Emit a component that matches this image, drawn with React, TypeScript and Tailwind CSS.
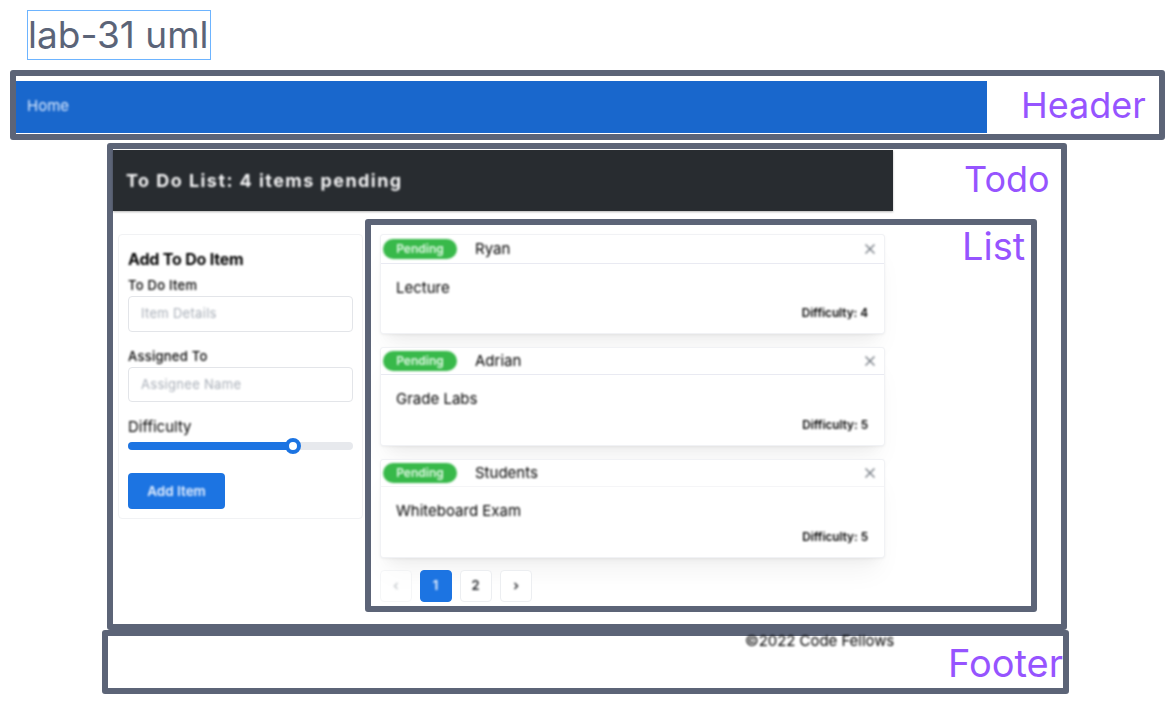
import React from "react";

const labelClass = "text-[36px] leading-[44px] text-[#9654ff] font-['Inter',sans-serif] whitespace-nowrap";

function Card({ name, task, level, h, head, line }: { name: string; task: string; level: number; h: string; head: string; line: string }) {
  return (
    <div className={`w-[505px] ${h} bg-white rounded-[3px] border border-[#f1f2f5] shadow-[0_1px_3px_rgba(0,0,0,0.05),0_20px_25px_-7px_rgba(0,0,0,0.05),0_10px_10px_-7px_rgba(0,0,0,0.04)] flex flex-col`}>
      <div className={`${head} border-b ${line} flex items-center pl-[2px] pr-[9px]`}>
        <span className="w-[74px] h-[20px] rounded-full bg-[#38b94a] text-[#e6fae9] text-[12px] font-semibold flex items-center justify-center blur-[0.8px]">Pending</span>
        <span className="ml-[18px] text-[15px] text-[#000000] blur-[0.8px]">{name}</span>
        <svg className="ml-auto blur-[0.8px]" width="10" height="10" viewBox="0 0 10 10" fill="none" stroke="#6f767e" strokeWidth="1.3"><path d="M0.5 0.5l9 9M9.5 0.5l-9 9" /></svg>
      </div>
      <div className="flex-1 flex flex-col pl-[15px] pr-[16px] pt-[14px]">
        <p className="text-[15px] leading-[20px] text-[#000000] blur-[0.8px]">{task}</p>
        <p className="mt-auto pb-[12px] text-right text-[11.7px] leading-[16px] font-semibold text-[#000000] blur-[0.8px]">Difficulty: {level}</p>
      </div>
    </div>
  );
}

function PageButton({ children, active, muted }: { children: React.ReactNode; active?: boolean; muted?: boolean }) {
  return (
    <div className={`w-[32px] h-[32px] rounded-[4px] border flex items-center justify-center text-[13px] font-semibold ${active ? "bg-[#1c74e2] border-[#1c74e2] text-[#eef5ff]" : "bg-white border-[#eceef1] text-[#1d2024]"} ${muted ? "opacity-50" : ""}`}>
      <span className="blur-[0.8px] flex mr-[1px]">{children}</span>
    </div>
  );
}

function Field({ label, placeholder, top, h }: { label: string; placeholder: string; top: string; h: string }) {
  return (
    <div className={top}>
      <p className="text-[13px] leading-[18px] font-medium tracking-[0.25px] text-[#000000] blur-[0.8px]">{label}</p>
      <div className={`mt-[2px] w-[225px] ${h} rounded-[4px] border border-[#e3e5e9] flex items-center pl-[12px] text-[13px] tracking-[0.3px] text-[#a9afb8]`}>
        <span className="blur-[0.8px]">{placeholder}</span>
      </div>
    </div>
  );
}

export default function App() {
  return (
    <div className="w-[1172px] h-[722px] bg-white overflow-hidden font-['Inter',sans-serif]">
      <div className="ml-[27px] mt-[10px] w-[184px] h-[50px] border border-[#6db4ff] flex items-center text-[37px] text-[#5b6478] whitespace-nowrap">lab-31 uml</div>

      <div className="ml-[10px] mt-[10px] w-[1155px] h-[70px] border-[6px] border-[#5c6477] rounded-[3px] flex">
        <div className="mt-[5px] w-[971px] h-[52px] bg-[#1967cc] flex items-center pl-[11px] pb-[1px] text-[15px] text-[#dcebff]">
          <span className="blur-[0.8px]">Home</span>
        </div>
        <div className={`${labelClass} ml-[34px] mt-[7px]`}>Header</div>
      </div>

      <div className="ml-[107px] mt-[3px] w-[960px] h-[487px] border-[6px] border-[#5c6477] rounded-[3px]">
        <div className="flex">
          <div className="mt-[1px] w-[780px] h-[61px] bg-[#282c30] flex items-center pl-[13px] text-[18px] font-bold tracking-[1.45px] text-[#f4f4f5] shadow-[0_1px_2px_rgba(0,0,0,0.3)]">
            <span className="blur-[0.8px]">To Do List: 4 items pending</span>
          </div>
          <div className={`${labelClass} ml-[71px] mt-[8px]`}>Todo</div>
        </div>
        <div className="flex items-start">
          <div className="ml-[5px] mt-[23px] w-[245px] h-[285px] rounded-[4px] border border-[#f1f2f4] px-[9px] pt-[14px]">
            <h2 className="text-[16px] leading-[20px] font-bold tracking-[-0.2px] text-[#000000] blur-[0.8px]">Add To Do Item</h2>
            <Field label="To Do Item" placeholder="Item Details" top="mt-[7px]" h="h-[36px]" />
            <Field label="Assigned To" placeholder="Assignee Name" top="mt-[15px]" h="h-[35px]" />
            <p className="mt-[15px] text-[15px] leading-[20px] text-[#000000] blur-[0.8px]">Difficulty</p>
            <div className="relative mt-[5px] w-[225px] h-[8px] rounded-full bg-[#e7e9ed]">
              <div className="h-[8px] w-[165px] rounded-full bg-[#1c74e2]" />
              <div className="absolute left-[157px] top-[-4px] w-[16px] h-[16px] rounded-full bg-white border-[4px] border-[#1c74e2]" />
            </div>
            <div className="mt-[23px] w-[97px] h-[36px] rounded-[4px] bg-[#1c74e2] flex items-center justify-center text-[13.5px] font-semibold text-[#e6f0fe]">
              <span className="blur-[0.8px]">Add Item</span>
            </div>
          </div>

          <div className="ml-[2px] mt-[8px] w-[672px] h-[393px] border-[6px] border-[#5c6477] rounded-[3px] flex">
            <div className="pl-[9px] pt-[9px] flex flex-col">
              <div className="flex flex-col gap-[13px]">
                <Card name="Ryan" task="Lecture" level={4} h="h-[100px]" head="h-[29px]" line="border-[#e9eaf2]" />
                <Card name="Adrian" task="Grade Labs" level={5} h="h-[99px]" head="h-[27px]" line="border-[#e9eaf2]" />
                <Card name="Students" task="Whiteboard Exam" level={5} h="h-[99px]" head="h-[27px]" line="border-[#f5f5f7]" />
              </div>
              <div className="mt-[12px] flex gap-[8px]">
                <PageButton muted>
                  <svg width="8" height="10" viewBox="0 0 8 10" fill="none" stroke="#8d949c" strokeWidth="1.4"><path d="M5.5 2L2.5 5l3 3" /></svg>
                </PageButton>
                <PageButton active>1</PageButton>
                <PageButton>2</PageButton>
                <PageButton>
                  <svg width="8" height="10" viewBox="0 0 8 10" fill="none" stroke="#1d2024" strokeWidth="1.4"><path d="M2.5 2l3 3-3 3" /></svg>
                </PageButton>
              </div>
            </div>
            <div className={`${labelClass} text-[38px] ml-[77px] mt-[-1px]`}>List</div>
          </div>
        </div>
      </div>

      <div className="ml-[102px] w-[967px] h-[64px] border-[6px] border-[#5c6477] rounded-[3px] flex">
        <div className="ml-[637px] mt-[-2px] text-[15px] leading-[14px] h-[14px] tracking-[-0.05px] text-[#000000] whitespace-nowrap">
          <span className="blur-[0.8px] inline-block">©2022 Code Fellows</span>
        </div>
        <div className={`${labelClass} text-[38px] ml-auto mt-[5px]`}>Footer</div>
      </div>
    </div>
  );
}
